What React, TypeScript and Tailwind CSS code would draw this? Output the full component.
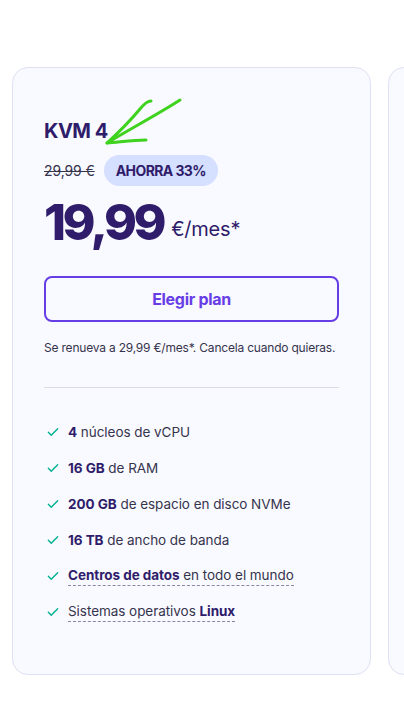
import React from 'react';

// Lista de características
type Feature = {
  bold?: string;
  text: string;
  boldAfter?: string;
  dashed?: boolean;
};

const features: Feature[] = [
  { bold: '4', text: ' núcleos de vCPU' },
  { bold: '16 GB', text: ' de RAM' },
  { bold: '200 GB', text: ' de espacio en disco NVMe' },
  { bold: '16 TB', text: ' de ancho de banda' },
  { bold: 'Centros de datos', text: ' en todo el mundo', dashed: true },
  { text: 'Sistemas operativos ', boldAfter: 'Linux', dashed: true },
];

function Check() {
  return (
    <svg width="14" height="14" viewBox="0 0 24 24" fill="none" className="shrink-0">
      <path d="M4 12.5l5 5L20 6.5" stroke="#00b090" strokeWidth="2.4" strokeLinecap="round" strokeLinejoin="round" />
    </svg>
  );
}

function Arrow() {
  return (
    <svg width="90" height="56" viewBox="0 0 90 56" fill="none" className="absolute left-[100px] top-[95px] pointer-events-none">
      <path d="M80 5 C 60 18, 30 34, 7 48" stroke="#3fd21e" strokeWidth="3" strokeLinecap="round" />
      <path d="M51 6 C 47 6, 44 9, 40 14 C 30 26, 18 38, 7 48 C 20 47, 34 45, 46 45" stroke="#3fd21e" strokeWidth="3" strokeLinecap="round" strokeLinejoin="round" />
    </svg>
  );
}

export default function App() {
  return (
    <div className="relative w-[404px] h-[718px] overflow-hidden bg-white pt-[67px] pl-3" style={{ fontFamily: 'Inter, "Noto Sans", sans-serif' }}>
      <div className="flex gap-[17px]">
        {/* Tarjeta del plan */}
        <div className="w-[359px] shrink-0 h-[608px] rounded-2xl border border-[#dfe0f3] bg-[#f9faff] px-[31px] pt-[49px]">
          <h2 className="text-[20px] leading-7 font-bold tracking-[-0.5px] text-[#2f1c6a]">KVM 4</h2>
          <div className="mt-[10px] flex items-center gap-[9px]">
            <span className="text-sm tracking-[-0.1px] text-[#36344d] line-through">29,99 €</span>
            <span className="rounded-full bg-[#d5dfff] px-3 py-[6px] text-sm leading-[19px] font-bold tracking-[-0.6px] text-[#2f1c6a]">AHORRA 33%</span>
          </div>
          <div className="mt-[8px] flex items-end">
            <span className="text-[50px] leading-[56px] font-extrabold tracking-[-3.5px] text-[#2f1c6a]">19,99</span>
            <span className="ml-2 mb-[7px] text-[20px] leading-7 tracking-[-0.2px] text-[#2f1c6a]">€/mes*</span>
          </div>
          <button className="mt-[26px] h-[46px] w-full rounded-lg border-2 border-[#673de6] text-base font-bold tracking-[-0.3px] text-[#673de6]">
            Elegir plan
          </button>
          <p className="mt-[18px] whitespace-nowrap text-[12px] leading-4 tracking-[-0.2px] text-[#36344d]">Se renueva a 29,99 €/mes*. Cancela cuando quieras.</p>
          <div className="mt-[31px] h-px bg-[#dadce8]" />
          <ul className="mt-[34px] flex flex-col gap-4">
            {features.map((f, i) => (
              <li key={i} className="flex items-center gap-[8px] pl-[2px] text-[13.5px] leading-5 tracking-[-0.05px] text-[#36344d]">
                <Check />
                <span className={f.dashed ? 'border-b border-dashed border-[#8a86a8] leading-[19px]' : ''}>
                  {f.bold && <b className="font-bold text-[#2f1c6a]">{f.bold}</b>}
                  {f.text}
                  {f.boldAfter && <b className="font-bold text-[#2f1c6a]">{f.boldAfter}</b>}
                </span>
              </li>
            ))}
          </ul>
        </div>
        {/* Siguiente tarjeta (cortada) */}
        <div className="w-[359px] shrink-0 h-[608px] rounded-2xl border border-[#dfe0f3] bg-[#f9faff]" />
      </div>
      <Arrow />
    </div>
  );
}
